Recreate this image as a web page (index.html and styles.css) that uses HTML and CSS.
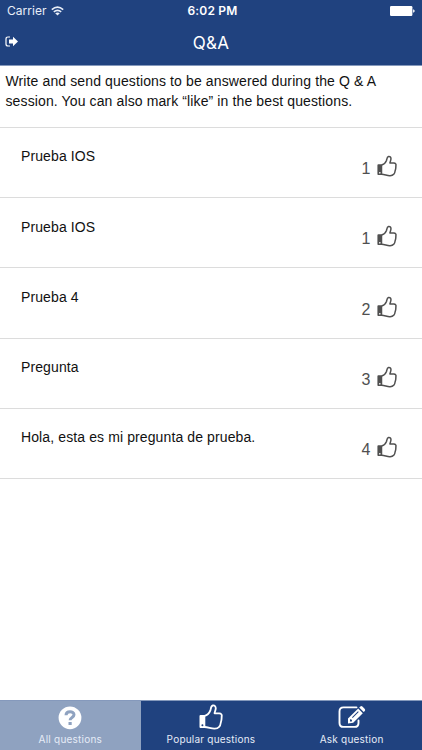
FILE: index.html
```html
<!DOCTYPE html>
<html lang="en">
<head>
<meta charset="utf-8">
<title>Q&amp;A</title>
<link rel="stylesheet" href="styles.css">
</head>
<body>
<svg class="defs" width="0" height="0" aria-hidden="true">
  <symbol id="thumb" viewBox="0 0 24 26">
    <path d="M5.6 11.8C8.4 11.2 10.4 9 11.4 6.4C11.9 4.7 11.9 1.9 13.8 1.5C15.8 1.2 17 2.8 16.7 4.9C16.5 6.8 15.6 8 15.5 9.3H20.2C22.3 9.3 23.2 11 22.6 12.8C22.8 15 22.4 17 21.7 19C21.5 21 21 22.2 20 23C18.8 24.4 17.2 24.7 15.2 24.6C11.8 24.5 9.2 23.1 5.6 23" fill="none" stroke="currentColor" stroke-width="1.8" stroke-linejoin="round"/>
    <path fill-rule="evenodd" fill="currentColor" d="M1.5 11H6.3V23.9H1.5Q.5 23.9 .5 22.9V12Q.5 11 1.5 11ZM3.4 20.2a1 1 0 1 0 0 2a1 1 0 1 0 0-2Z"/>
  </symbol>
</svg>
<div class="app">
  <header class="top">
    <div class="status">
      <div class="carrier"><span>Carrier</span>
        <svg class="wifi" viewBox="0 0 13 10"><path d="M.8 3.6Q6.5-1.5 12.2 3.6M2.8 5.9Q6.5 2.7 10.2 5.9" fill="none" stroke="currentColor" stroke-width="1.6"/><path d="M4.2 7.3Q6.5 5.5 8.8 7.3L6.5 9.6Z" fill="currentColor"/></svg>
      </div>
      <span class="time">6:02 PM</span>
      <svg class="battery" viewBox="0 0 25 10"><rect width="22.4" height="10" rx="1.2" fill="currentColor"/><path d="M23.1 3.3Q24.7 4 24.7 5T23.1 6.7Z" fill="currentColor"/></svg>
    </div>
    <div class="nav">
      <svg class="exit" viewBox="0 0 14 12"><path d="M5 1H3Q1 1 1 3V8Q1 10 3 10H5" fill="none" stroke="currentColor" stroke-width="1.2"/><path d="M4 3.4H8V.7L13 5.5L8 10.3V7.6H4Z" fill="currentColor"/></svg>
      <h1>Q&amp;A</h1>
    </div>
  </header>
  <main>
    <p class="intro">Write and send questions to be answered during the Q &amp; A<br>session. You can also mark “like” in the best questions.</p>
    <ul class="questions">
      <li><span class="text">Prueba IOS</span><span class="likes"><span class="count">1</span><svg><use href="#thumb"/></svg></span></li>
      <li><span class="text">Prueba IOS</span><span class="likes"><span class="count">1</span><svg><use href="#thumb"/></svg></span></li>
      <li><span class="text">Prueba 4</span><span class="likes"><span class="count">2</span><svg><use href="#thumb"/></svg></span></li>
      <li><span class="text">Pregunta</span><span class="likes"><span class="count">3</span><svg><use href="#thumb"/></svg></span></li>
      <li><span class="text">Hola, esta es mi pregunta de prueba.</span><span class="likes"><span class="count">4</span><svg><use href="#thumb"/></svg></span></li>
    </ul>
  </main>
  <nav class="tabs">
    <a class="tab active"><svg viewBox="0 0 24 26"><circle cx="12" cy="13.8" r="11.4" fill="currentColor"/><path d="M8 11.2C8.2 6.6 16 6.7 16 10.8C16 13.5 12.1 13.4 12.1 16.2" fill="none" stroke="#8fa2c0" stroke-width="3"/><path d="M10.5 18H13.7V21H10.5Z" fill="#8fa2c0"/></svg><span>All questions</span></a>
    <a class="tab"><svg viewBox="0 0 24 26"><use href="#thumb"/></svg><span>Popular questions</span></a>
    <a class="tab"><svg class="edit" viewBox="0 0 28 26"><path d="M18.5 3.4H5.5Q1.5 3.4 1.5 7.4V18.9Q1.5 22.9 5.5 22.9H16.5Q20.5 22.9 20.5 18.9V16.5" fill="none" stroke="currentColor" stroke-width="1.9" stroke-linecap="round"/><path fill-rule="evenodd" fill="currentColor" d="M20.2 4.6L24.8 9.2L15.2 18.8L10 19.6V14.5ZM12 15.8V17.6L13.8 17.4L14 16.2L12.9 15ZM14 13.2L14.7 13.9L20.7 7.9L20 7.2Z"/><path d="M21.2 3.6L22.4 2.4Q23.4 1.6 24.4 2.5L26.8 4.9Q27.6 5.9 26.8 6.9L25.7 8.1Z" fill="currentColor"/></svg><span>Ask question</span></a>
  </nav>
</div>
</body>
</html>
```
FILE: styles.css
```css
* { box-sizing: border-box; }
body { margin: 0; background: #fff; color: #111; font-family: "Liberation Sans", Arial, sans-serif; }
.defs { position: absolute; }
.app { height: 750px; display: flex; flex-direction: column; }
.top { height: 66px; background: #20427f; color: #fff; border-bottom: 1px solid #8599bc; }
.status { height: 22px; padding: 0 7px; display: grid; grid-template-columns: 1fr auto 1fr; align-items: center; font: 12px/22px Inter, sans-serif; }
.carrier { display: flex; align-items: center; gap: 4px; color: #e9eef8; letter-spacing: .05px; }
.wifi { width: 13px; height: 10px; }
.time { font-weight: 600; font-size: 12px; letter-spacing: .2px; padding-left: 3px; }
.battery { width: 25px; height: 10px; justify-self: end; }
.nav { height: 43px; display: grid; grid-template-columns: 1fr auto 1fr; padding: 0 5px; }
.exit { width: 14px; height: 12px; margin-top: 14px; }
h1 { margin: 0; font: 400 17px/43px Inter, sans-serif; letter-spacing: .2px; }
.intro { margin: 0; height: 61px; padding: 5px 0 0 5.5px; font-size: 14px; line-height: 20.3px; letter-spacing: .12px; white-space: nowrap; }
.questions { list-style: none; margin: 0; padding: 0; border-top: 1px solid #dcdcdc; }
.questions li { height: 70.2px; border-bottom: 1px solid #dcdcdc; padding: 0 25.5px 0 21px; display: flex; justify-content: space-between; }
.text { font-size: 14px; line-height: 20px; letter-spacing: .11px; margin-top: 18.4px; }
.likes { height: 24px; margin-top: 26.3px; display: flex; align-items: center; gap: 6px; font-size: 16px; color: #505050; }
.count { padding-top: 6px; }
.likes svg { width: 20px; height: 22px; }
.tabs { margin-top: auto; height: 50px; display: grid; grid-template-columns: repeat(3, 1fr); background: #20427f; color: #fff; border-top: 1px solid #8599bc; }
.tab { display: flex; flex-direction: column; align-items: center; padding-top: 3px; font: 10px/14px Inter, sans-serif; letter-spacing: .22px; }
.tab svg { width: 24px; height: 26px; }
.tab .edit { width: 28px; }
.tab span { margin-top: 2px; color: #e6ecf7; }
.active { background: #8fa2c0; }
```
